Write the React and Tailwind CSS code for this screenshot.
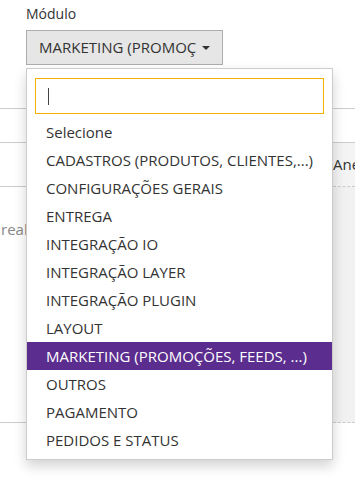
import React from "react";

const modulos = [
  "Selecione",
  "CADASTROS (PRODUTOS, CLIENTES,...)",
  "CONFIGURAÇÕES GERAIS",
  "ENTREGA",
  "INTEGRAÇÃO IO",
  "INTEGRAÇÃO LAYER",
  "INTEGRAÇÃO PLUGIN",
  "LAYOUT",
  "MARKETING (PROMOÇÕES, FEEDS, ...)",
  "OUTROS",
  "PAGAMENTO",
  "PEDIDOS E STATUS",
];

const selecionado = "MARKETING (PROMOÇÕES, FEEDS, ...)";

function App() {
  return (
    <div className="relative w-[355px] h-[481px] overflow-hidden bg-white text-[15px] text-[#333] font-['Open_Sans','Noto_Sans',sans-serif]">
      {/* Campo modulo */}
      <div className="h-[65px] pl-[26px] pt-[4px]">
        <div className="h-[20px] leading-[20px] text-[14px] text-[#333]">Módulo</div>
        <button className="mt-[6px] flex h-[35px] w-[197px] items-center border border-[#adadad] bg-[#e6e6e6] pl-[12px] pr-[12px] text-[#333]">
          <span className="w-[158px] overflow-hidden whitespace-nowrap text-left">{selecionado}</span>
          <span className="ml-[6px] h-0 w-0 border-x-[4px] border-t-[4px] border-x-transparent border-t-[#333]" />
        </button>
      </div>

      {/* Tabela ao fundo */}
      <div className="h-[44px] border-b border-[#ccc]" />
      <div className="h-[34px] border-b border-[#ccc]" />
      <div className="flex h-[44px]">
        <div className="flex-1 border-b border-[#ccc]" />
        <div className="w-[22px] border-b border-dashed border-[#ccc] bg-[#f4f4f4] pt-[10px] text-[#333] overflow-hidden whitespace-nowrap">
          Anexos
        </div>
      </div>
      <div className="flex h-[236px]">
        <div className="flex-1 border-b border-[#ccc] pt-[31px] pl-[1px] text-[#888]">real</div>
        <div className="w-[22px] border-b border-dashed border-[#ccc] bg-[#f1f1f1]" />
      </div>

      {/* Dropdown aberto */}
      <div className="absolute left-[26px] top-[68px] w-[307px] border border-[#ccc] bg-white pt-[9px] pb-[5px] shadow-[0_6px_12px_rgba(0,0,0,0.175)]">
        <div className="mx-[8px] flex h-[36px] items-center border border-[#f5b400] pl-[12px]">
          <span className="h-[17px] w-[1px] bg-[#444]" />
        </div>
        <ul className="mt-[4px]">
          {modulos.map((m) => (
            <li
              key={m}
              className={
                m === selecionado
                  ? "h-[28px] pl-[19px] leading-[28px] whitespace-nowrap bg-[#5b2d8e] text-white"
                  : "h-[28px] pl-[19px] leading-[28px] whitespace-nowrap text-[#333]"
              }
            >
              {m}
            </li>
          ))}
        </ul>
      </div>
    </div>
  );
}

export default App;
